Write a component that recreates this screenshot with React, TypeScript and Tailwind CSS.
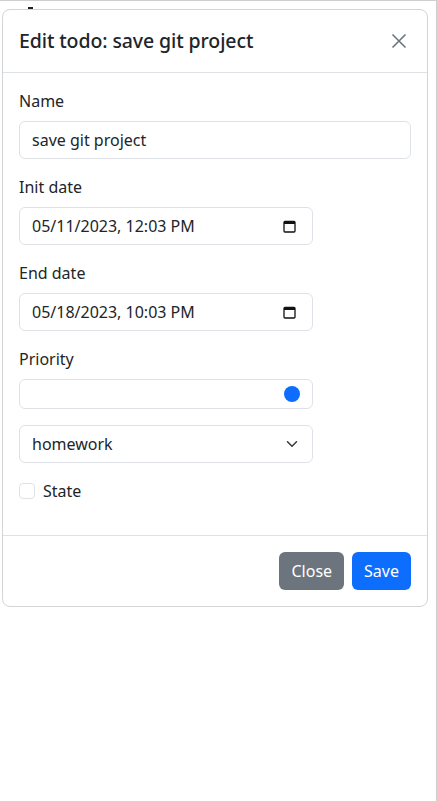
export default function App() {
  return (
    <div
      className="h-[801px] w-[437px] border-t border-r border-[#cfcfcf] bg-white text-[#212529]"
      style={{ fontFamily: '"Noto Sans", sans-serif' }}
    >
      <div className="h-[8px] pl-[28px] pt-[6px]">
        <div className="h-[2px] w-[5px] bg-[#222]" />
      </div>

      <div className="ml-[2px] w-[426px] rounded-[8px] border border-[#d3d4d5] bg-white">
        {/* header */}
        <div className="flex items-center justify-between border-b border-[#dee2e6] p-4">
          <h5 className="text-[19.5px] leading-[30px] font-medium tracking-[-0.1px]">Edit todo: save git project</h5>
          <button className="flex h-[24px] w-[24px] items-center justify-center text-[#6c757d]">
            <svg width="16" height="16" viewBox="0 0 16 16" fill="none" stroke="currentColor" strokeWidth="1.6">
              <path d="M1.5 1.5l13 13M14.5 1.5l-13 13" />
            </svg>
          </button>
        </div>

        {/* body */}
        <div className="p-4 text-[16px] leading-6">
          <div className="mb-4">
            <label className="mb-2 block">Name</label>
            <div className="h-[38px] w-full rounded-[6px] border border-[#dee2e6] px-3 py-[6px]">save git project</div>
          </div>
          <div className="mb-4">
            <label className="mb-2 block">Init date</label>
            <DateField value="05/11/2023, 12:03 PM" />
          </div>
          <div className="mb-4">
            <label className="mb-2 block">End date</label>
            <DateField value="05/18/2023, 10:03 PM" />
          </div>
          <div className="mb-4">
            <label className="mb-2 block">Priority</label>
            <div className="flex h-[30px] w-[294px] items-center justify-end rounded-[6px] border border-[#dee2e6] px-3">
              <span className="h-4 w-4 rounded-full bg-[#0d6efd]" />
            </div>
          </div>
          <div className="mb-4 flex h-[38px] w-[294px] items-center justify-between rounded-[6px] border border-[#dee2e6] pr-3 pl-3">
            <span>homework</span>
            <svg width="16" height="12" viewBox="0 0 16 16" fill="none" stroke="#343a40" strokeWidth="2" strokeLinecap="round" strokeLinejoin="round">
              <path d="m2 5 6 6 6-6" />
            </svg>
          </div>
          <div className="mb-4 flex h-6 items-center gap-2">
            <span className="h-4 w-4 rounded-[4px] border border-[#dee2e6]" />
            <span>State</span>
          </div>
        </div>

        {/* footer */}
        <div className="flex justify-end gap-2 border-t border-[#dee2e6] px-4 py-4">
          <button className="h-[38px] rounded-[6px] bg-[#6c757d] px-3 text-[16px] text-white">Close</button>
          <button className="h-[38px] rounded-[6px] bg-[#0d6efd] px-3 text-[16px] text-white">Save</button>
        </div>
      </div>
    </div>
  );
}

function DateField({ value }: { value: string }) {
  return (
    <div className="flex h-[38px] w-[294px] items-center justify-between rounded-[6px] border border-[#dee2e6] pr-[16px] pl-3">
      <span>{value}</span>
      <svg width="13" height="13" viewBox="0 0 13 13" fill="none">
        <rect x="1" y="1.5" width="11" height="10.5" rx="1" stroke="#111" strokeWidth="1.3" />
        <rect x="1" y="1.5" width="11" height="2.5" fill="#111" />
      </svg>
    </div>
  );
}
